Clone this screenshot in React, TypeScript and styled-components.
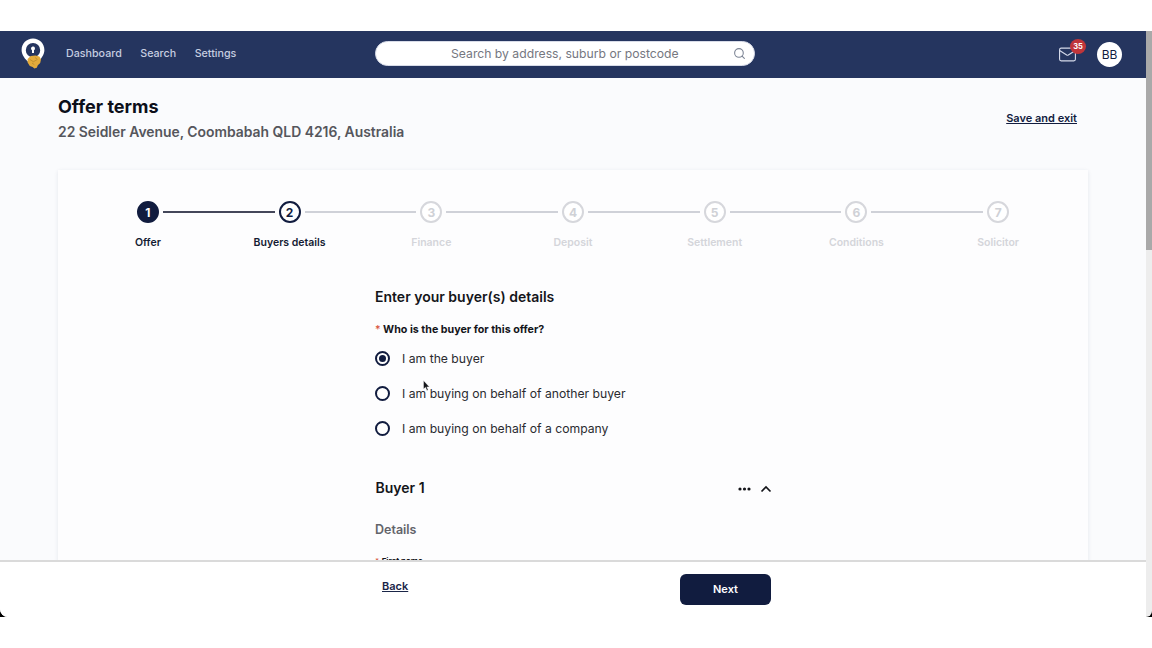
import styled, { createGlobalStyle } from 'styled-components';
import { Mail, Search } from 'lucide-react';

const GlobalStyle = createGlobalStyle`
  html, body {
    margin: 0;
    padding: 0;
    height: 100%;
    background: #fff;
    overflow: hidden;
    font-family: Inter, "Liberation Sans", sans-serif;
  }
  * { box-sizing: border-box; }
`;

const Frame = styled.div`
  position: relative;
  margin-top: 31px;
  height: 586px;
  display: flex;
  background: #000;
`;

const Window = styled.div`
  flex: 1;
  min-width: 0;
  display: flex;
  flex-direction: column;
  background: #fff;
  border-bottom-left-radius: 8px;
  overflow: hidden;
`;

const Scrollbar = styled.div`
  width: 6px;
  background: #ededed;
  border-bottom-right-radius: 8px;
`;

const ScrollThumb = styled.div`
  height: 219px;
  background: #a9a9a9;
`;

const Pointer = styled.svg`
  position: absolute;
  left: 423px;
  top: 349px;
`;

const Nav = styled.header`
  height: 47px;
  flex-shrink: 0;
  display: flex;
  align-items: center;
  background: #25355f;
  padding: 0 24px 2px 20.5px;
`;

const NavLeft = styled.div`
  width: 354.5px;
  display: flex;
  align-items: center;
`;

const NavLinks = styled.nav`
  display: flex;
  gap: 18.5px;
  margin-left: 20.5px;
`;

const NavLink = styled.a`
  font-size: 10.7px;
  font-weight: 500;
  color: #c6cde0;
`;

const SearchBox = styled.div`
  width: 380px;
  height: 25px;
  display: flex;
  align-items: center;
  background: #fff;
  border-radius: 13px;
  border: 1px solid #d8dce8;
  padding: 0 8px 0 75px;
  font-size: 12.2px;
  color: #75777f;
`;

const SearchText = styled.span`
  flex: 1;
`;

const NavRight = styled.div`
  margin-left: auto;
  display: flex;
  align-items: center;
  gap: 20px;
  margin-top: 2px;
`;

const MailWrap = styled.div`
  position: relative;
  display: flex;
  color: #d5daea;
`;

const Badge = styled.span`
  position: absolute;
  top: -6px;
  right: -9px;
  width: 16px;
  height: 15px;
  border-radius: 50%;
  background: #c0353a;
  color: #fff;
  font-size: 7.5px;
  font-weight: 700;
  display: flex;
  align-items: center;
  justify-content: center;
`;

const Avatar = styled.div`
  width: 25px;
  height: 25px;
  border-radius: 50%;
  background: #fff;
  color: #111c3f;
  font-size: 12px;
  font-weight: 400;
  display: flex;
  align-items: center;
  justify-content: center;
`;

const Content = styled.main`
  flex: 1;
  min-height: 0;
  overflow: hidden;
  background: #fafbfd;
  padding: 18px 58px 0;
`;

const PageHead = styled.div`
  display: flex;
  justify-content: space-between;
  align-items: flex-start;
  height: 74px;
  padding-right: 11px;
`;

const PageTitle = styled.h1`
  margin: 0 0 5px;
  font-size: 18px;
  line-height: 22px;
  font-weight: 700;
  color: #0c0f1a;
`;

const Address = styled.div`
  font-size: 13.9px;
  line-height: 18px;
  font-weight: 600;
  color: #55565c;
`;

const SaveLink = styled.a`
  margin-top: 15px;
  font-size: 11px;
  line-height: 14px;
  font-weight: 600;
  color: #111c3f;
  text-decoration: underline;
`;

const Card = styled.section`
  width: 1030px;
  height: 500px;
  background: #fdfdfe;
  box-shadow: 0 1px 4px rgba(40, 50, 90, 0.1);
  padding: 31px 19px 0;
`;

const Stepper = styled.ol`
  list-style: none;
  margin: 0;
  padding: 0;
  display: grid;
  grid-template-columns: repeat(7, 1fr);
`;

const Step = styled.li`
  display: flex;
  flex-direction: column;
  align-items: center;
`;

const StepTrack = styled.div`
  width: 100%;
  display: flex;
  align-items: center;
`;

const StepLine = styled.span<{ $state: 'none' | 'done' | 'todo' }>`
  flex: 1;
  height: 2px;
  background: ${(p) =>
    p.$state === 'done' ? '#44475a' : p.$state === 'todo' ? '#cfd1d8' : 'transparent'};
`;

const StepCircle = styled.span<{ $state: 'done' | 'current' | 'todo' }>`
  width: 22px;
  height: 22px;
  margin: 0 4px;
  border-radius: 50%;
  display: flex;
  align-items: center;
  justify-content: center;
  font-size: 12px;
  font-weight: 700;
  background: ${(p) => (p.$state === 'done' ? '#111c3f' : '#fff')};
  color: ${(p) => (p.$state === 'done' ? '#fff' : p.$state === 'current' ? '#111c3f' : '#cfd1d6')};
  border: 2px solid ${(p) => (p.$state === 'todo' ? '#d6d7dc' : '#111c3f')};
`;

const StepLabel = styled.span<{ $muted: boolean }>`
  margin-top: 13px;
  font-size: 10.5px;
  line-height: 14px;
  font-weight: 600;
  color: ${(p) => (p.$muted ? '#d4d5da' : '#141b33')};
`;

const Form = styled.div`
  width: 397px;
  margin: 38px 0 0 298px;
`;

const FormTitle = styled.h2`
  margin: 0 0 17px;
  font-size: 14px;
  line-height: 18px;
  font-weight: 600;
  color: #14151a;
`;

const Question = styled.div`
  font-size: 10.7px;
  line-height: 14px;
  font-weight: 700;
  color: #14151a;
`;

const Required = styled.span`
  color: #d9573f;
  margin-right: 2.5px;
  font-weight: 500;
`;

const RadioGroup = styled.div`
  margin-top: 12px;
  display: flex;
  flex-direction: column;
  gap: 17px;
`;

const RadioRow = styled.label`
  display: flex;
  align-items: center;
  gap: 12px;
  height: 18px;
  font-size: 12.2px;
  color: #2a2b30;
`;

const RadioDot = styled.span<{ $checked: boolean }>`
  width: 15px;
  height: 15px;
  border-radius: 50%;
  border: 2px solid #111c3f;
  background: #fff;
  display: flex;
  align-items: center;
  justify-content: center;
  &::after {
    content: '';
    display: ${(p) => (p.$checked ? 'block' : 'none')};
    width: 7px;
    height: 7px;
    border-radius: 50%;
    background: #111c3f;
  }
`;

const BuyerHead = styled.div`
  margin-top: 42px;
  display: flex;
  align-items: center;
  justify-content: space-between;
  height: 20px;
`;

const BuyerName = styled.h3`
  margin: 0;
  padding: 0 0 3px 0.5px;
  font-size: 14px;
  font-weight: 600;
  color: #14151a;
`;

const BuyerActions = styled.div`
  display: flex;
  align-items: center;
  gap: 9px;
  color: #14151a;
`;

const SectionTitle = styled.h4`
  margin: 23px 0 0;
  font-size: 12.5px;
  line-height: 16px;
  font-weight: 600;
  color: #63646a;
`;

const FieldLabel = styled.div`
  margin-top: 18px;
  font-size: 8px;
  line-height: 10px;
  font-weight: 700;
  color: #14151a;
`;

const Footer = styled.footer`
  height: 57px;
  flex-shrink: 0;
  background: #fff;
  border-top: 2px solid #dadada;
  display: flex;
  padding: 12px 0 0 382px;
  width: 100%;
`;

const BackLink = styled.a`
  margin-top: 5px;
  width: 298px;
  font-size: 11px;
  line-height: 15px;
  font-weight: 600;
  color: #1a2548;
  text-decoration: underline;
`;

const NextButton = styled.button`
  width: 91px;
  height: 31px;
  border: none;
  border-radius: 6px;
  background: #111c3f;
  color: #fff;
  font-family: inherit;
  font-size: 11px;
  font-weight: 600;
  padding: 0 0 2px;
`;

const LogoMark = () => (
  <svg width="25" height="32" viewBox="0 0 25 32">
    <path
      fillRule="evenodd"
      fill="#fff"
      d="M12 .6C5.6.6.6 5.6.6 12c0 5 3.4 9.2 7.4 12.4h8C20 21.2 23.4 17 23.4 12 23.4 5.6 18.4.6 12 .6Zm0 4.4a7.2 7.2 0 1 1 0 14.4A7.2 7.2 0 0 1 12 5Z"
    />
    <path fill="#fff" d="M10 10.6a2 2 0 1 1 3 1.7v2.6h-2v-2.6a2 2 0 0 1-1-1.7Z" />
    <path
      fill="#e3aa3b"
      d="M6.6 21l3.2-3 4.6-.6 4 1.2 1.6 3-.8 3.4-2.4 2.2-1 2.6-2.4.8-1.8-1.6-2.8-1-2.2-3.4Z"
    />
    <path fill="none" stroke="#a87d27" strokeWidth=".6" d="M9 21.5l3.4 2.2 3.4-1.8M11 25l2.4 1.8M14 19.5l2.5 2" />
  </svg>
);

const DotsIcon = () => (
  <svg width="13" height="4" viewBox="0 0 13 4">
    <circle cx="2" cy="2" r="1.6" fill="currentColor" />
    <circle cx="6.5" cy="2" r="1.6" fill="currentColor" />
    <circle cx="11" cy="2" r="1.6" fill="currentColor" />
  </svg>
);

const ChevronIcon = () => (
  <svg width="12" height="8" viewBox="0 0 12 8">
    <path d="M1.5 6.5 6 2l4.5 4.5" fill="none" stroke="currentColor" strokeWidth="1.7" />
  </svg>
);

const steps = ['Offer', 'Buyers details', 'Finance', 'Deposit', 'Settlement', 'Conditions', 'Solicitor'];
const radios = [
  'I am the buyer',
  'I am buying on behalf of another buyer',
  'I am buying on behalf of a company',
];

export default function App() {
  return (
    <>
      <GlobalStyle />
      <Frame>
        <Window>
          <Nav>
            <NavLeft>
              <LogoMark />
              <NavLinks>
                <NavLink>Dashboard</NavLink>
                <NavLink>Search</NavLink>
                <NavLink>Settings</NavLink>
              </NavLinks>
            </NavLeft>
            <SearchBox>
              <SearchText>Search by address, suburb or postcode</SearchText>
              <Search size={13} color="#7c8494" />
            </SearchBox>
            <NavRight>
              <MailWrap>
                <Mail size={19} strokeWidth={1.4} />
                <Badge>35</Badge>
              </MailWrap>
              <Avatar>BB</Avatar>
            </NavRight>
          </Nav>
          <Content>
            <PageHead>
              <div>
                <PageTitle>Offer terms</PageTitle>
                <Address>22 Seidler Avenue, Coombabah QLD 4216, Australia</Address>
              </div>
              <SaveLink>Save and exit</SaveLink>
            </PageHead>
            <Card>
              <Stepper>
                {steps.map((label, i) => (
                  <Step key={label}>
                    <StepTrack>
                      <StepLine $state={i === 0 ? 'none' : i === 1 ? 'done' : 'todo'} />
                      <StepCircle $state={i === 0 ? 'done' : i === 1 ? 'current' : 'todo'}>
                        {i + 1}
                      </StepCircle>
                      <StepLine $state={i === 6 ? 'none' : i === 0 ? 'done' : 'todo'} />
                    </StepTrack>
                    <StepLabel $muted={i > 1}>{label}</StepLabel>
                  </Step>
                ))}
              </Stepper>
              <Form>
                <FormTitle>Enter your buyer(s) details</FormTitle>
                <Question>
                  <Required>*</Required>Who is the buyer for this offer?
                </Question>
                <RadioGroup>
                  {radios.map((label, i) => (
                    <RadioRow key={label}>
                      <RadioDot $checked={i === 0} />
                      {label}
                    </RadioRow>
                  ))}
                </RadioGroup>
                <BuyerHead>
                  <BuyerName>Buyer 1</BuyerName>
                  <BuyerActions>
                    <DotsIcon />
                    <ChevronIcon />
                  </BuyerActions>
                </BuyerHead>
                <SectionTitle>Details</SectionTitle>
                <FieldLabel>
                  <Required>*</Required>First name
                </FieldLabel>
              </Form>
            </Card>
          </Content>
          <Footer>
            <BackLink>Back</BackLink>
            <NextButton>Next</NextButton>
          </Footer>
        </Window>
        <Scrollbar>
          <ScrollThumb />
        </Scrollbar>
        <Pointer width="8" height="12" viewBox="0 0 8 12">
          <path d="M.5.5v8.6l2-1.8 1.4 3.2 1.3-.6-1.4-3h2.6Z" fill="#14151a" stroke="#fff" strokeWidth=".4" />
        </Pointer>
      </Frame>
    </>
  );
}
